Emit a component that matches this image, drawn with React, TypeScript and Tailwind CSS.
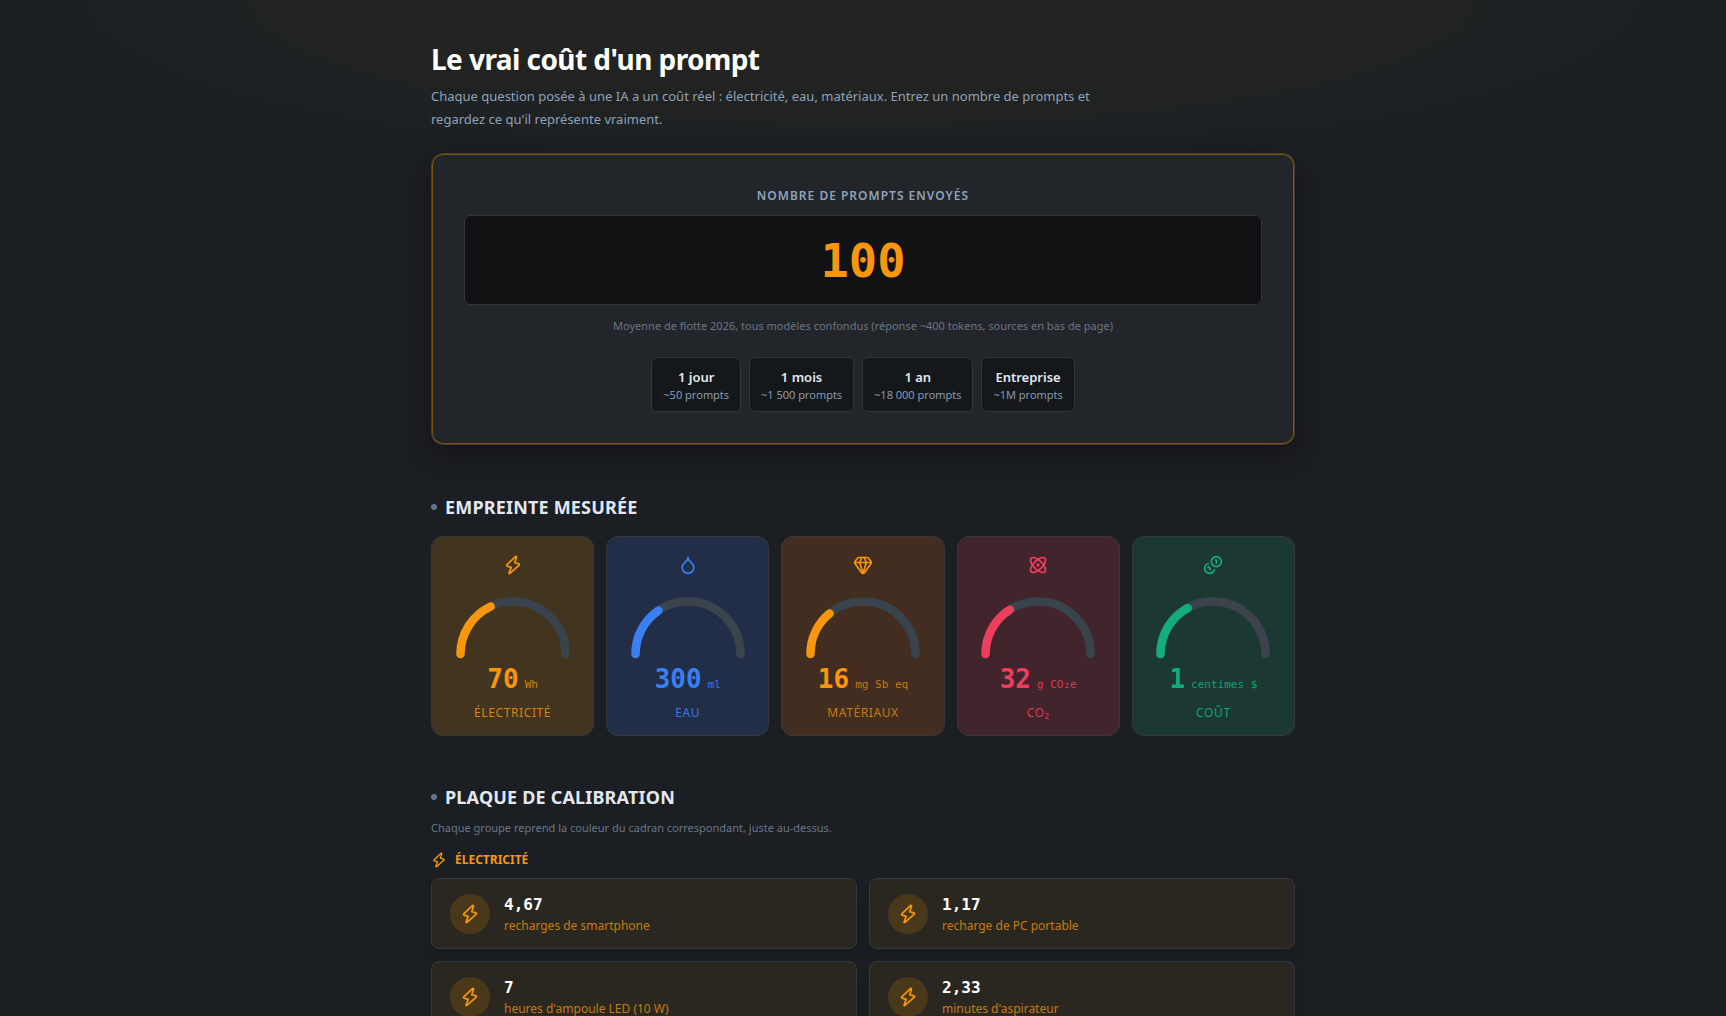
import { Atom, Droplet, Gem } from "lucide-react";

const BoltIcon = ({ className }: { className?: string }) => (
  <svg
    viewBox="0 0 24 24"
    fill="none"
    stroke="currentColor"
    strokeWidth="2"
    strokeLinecap="round"
    strokeLinejoin="round"
    className={className}
  >
    <path d="M14.6 2.2 4.500 11.900a.9.9 0 0 0 .4 1.500l5 1.400-2.600 6.500a.6.6 0 0 0 1 .7L19.500 12.100a.9.9 0 0 0-.4-1.500l-5-1.400 2-6.300a.6.6 0 0 0-1.500-.7Z" />
  </svg>
);

const CoinsIcon = ({ className }: { className?: string }) => (
  <svg
    viewBox="0 0 24 24"
    fill="none"
    stroke="currentColor"
    strokeWidth="2"
    strokeLinecap="round"
    strokeLinejoin="round"
    className={className}
  >
    <path d="M13.744 17.736a6 6 0 1 1-7.48-7.48" />
    <path d="M15 6h1v4" />
    <path d="m6.134 14.768.866-.5 2 3.464" />
    <circle cx="16" cy="8" r="6" />
  </svg>
);

const presets = [
  { label: "1 jour", detail: "~50 prompts" },
  { label: "1 mois", detail: "~1 500 prompts" },
  { label: "1 an", detail: "~18 000 prompts" },
  { label: "Entreprise", detail: "~1M prompts" },
];

const gauges = [
  {
    label: "Électricité",
    value: "70",
    unit: "Wh",
    percent: 36,
    icon: BoltIcon,
    card: "bg-[#42341f] text-[#f8960e]",
    track: "text-[#38434c]",
    muted: "text-[#d7840f]",
  },
  {
    label: "Eau",
    value: "300",
    unit: "ml",
    percent: 31,
    icon: Droplet,
    card: "bg-[#222e48] text-[#3980f2]",
    track: "text-[#3b444b]",
    muted: "text-[#3878e0]",
  },
  {
    label: "Matériaux",
    value: "16",
    unit: "mg Sb eq",
    percent: 28,
    icon: Gem,
    card: "bg-[#422d20] text-[#f8960e]",
    track: "text-[#38434c]",
    muted: "text-[#c67b12]",
  },
  {
    label: "CO₂",
    value: "32",
    unit: "g CO₂e",
    percent: 32,
    icon: Atom,
    card: "bg-[#42242c] text-[#ee3e5c]",
    track: "text-[#38434c]",
    muted: "text-[#d93c56]",
  },
  {
    label: "Coût",
    value: "1",
    unit: "centimes $",
    percent: 34,
    icon: CoinsIcon,
    card: "bg-[#1b3833] text-[#13ad7c]",
    track: "text-[#3c434c]",
    muted: "text-[#14a073]",
  },
];

const equivalents = [
  { value: "4,67", label: "recharges de smartphone" },
  { value: "1,17", label: "recharge de PC portable" },
  { value: "7", label: "heures d'ampoule LED (10 W)" },
  { value: "2,33", label: "minutes d'aspirateur" },
];

const SectionTitle = ({ children }: { children: string }) => (
  <h2 className="flex items-center gap-2 text-lg leading-7 font-bold tracking-[0.01em] uppercase text-slate-200">
    <span className="size-1.5 rounded-full bg-slate-500" />
    {children}
  </h2>
);

const Gauge = ({ percent, track }: { percent: number; track: string }) => (
  <svg viewBox="0 0 120 68" fill="none" strokeWidth="8.5" strokeLinecap="round" className="w-[120px]">
    <path d="M7.500 62a52.500 52.500 0 0 1 105 0" stroke="currentColor" className={track} />
    <path
      d="M7.500 62a52.500 52.500 0 0 1 105 0"
      stroke="currentColor"
      pathLength="100"
      strokeDasharray={`${percent} 200`}
    />
  </svg>
);

export default function App() {
  return (
    <div className="min-h-screen bg-[#1b1e23] bg-[radial-gradient(ellipse_60%_210px_at_50%_0%,#232421,#212322_50%,#1d2124_70%,#1b1e23)] font-['Noto_Sans',sans-serif]">
      <main className="mx-auto max-w-[912px] px-6 pt-10">
        <header>
          <h1 className="text-[28px] leading-[38px] font-bold tracking-[-0.02em] text-white">
            Le vrai coût d'un prompt
          </h1>
          <p className="mt-[7px] max-w-[680px] text-[13px] leading-[23px] text-slate-400">
            Chaque question posée à une IA a un coût réel : électricité, eau, matériaux. Entrez un
            nombre de prompts et regardez ce qu'il représente vraiment.
          </p>
        </header>

        <section className="mt-[22px] flex flex-col items-center rounded-xl border border-[#4d3c22] bg-[#22252a] p-8 shadow-[inset_0_0_0_1px_#7f5413,0_8px_24px_rgba(0,0,0,0.35)]">
          <label
            htmlFor="prompts"
            className="text-xs leading-5 font-semibold tracking-[1px] uppercase text-slate-400"
          >
            Nombre de prompts envoyés
          </label>
          <input
            id="prompts"
            type="text"
            defaultValue="100"
            className="mt-[9px] h-[90px] w-full rounded-md border border-[#30363c] bg-[#111214] text-center font-['DejaVu_Sans_Mono',monospace] text-[47px] font-bold text-[#f8960e] outline-none"
          />
          <p className="mt-3 text-[11px] leading-[18px] text-[#6a7686]">
            Moyenne de flotte 2026, tous modèles confondus (réponse ~400 tokens, sources en bas de
            page)
          </p>
          <div className="mt-[22px] flex flex-wrap justify-center gap-2">
            {presets.map((preset) => (
              <button
                key={preset.label}
                type="button"
                className="flex h-[55px] flex-col items-center justify-center rounded-md border border-[#30353b] bg-[#15181b] px-[11px]"
              >
                <span className="text-[13px] leading-5 font-semibold text-slate-200">
                  {preset.label}
                </span>
                <span className="font-['Open_Sans',sans-serif] text-[11px] leading-4 text-slate-400">
                  {preset.detail}
                </span>
              </button>
            ))}
          </div>
        </section>

        <section className="mt-12">
          <SectionTitle>Empreinte mesurée</SectionTitle>
          <div className="mt-[15px] grid grid-cols-5 gap-3">
            {gauges.map(({ icon: Icon, ...gauge }) => (
              <div
                key={gauge.label}
                className={`flex h-[200px] flex-col items-center rounded-xl border border-[#34393f] pt-[18px] ${gauge.card}`}
              >
                <Icon className="size-5" />
                <div className="mt-[17px]">
                  <Gauge percent={gauge.percent} track={gauge.track} />
                </div>
                <div className="mt-[3px] flex items-baseline gap-1.5 font-['DejaVu_Sans_Mono',monospace]">
                  <span className="text-[26px] leading-8 font-bold">{gauge.value}</span>
                  <span className={`text-[11px] ${gauge.muted}`}>{gauge.unit}</span>
                </div>
                <div className={`mt-2.5 text-xs leading-4 tracking-wider uppercase ${gauge.muted}`}>
                  {gauge.label}
                </div>
              </div>
            ))}
          </div>
        </section>

        <section className="mt-[47px]">
          <SectionTitle>Plaque de calibration</SectionTitle>
          <p className="mt-2 text-[11px] leading-[18px] text-[#6a7686]">
            Chaque groupe reprend la couleur du cadran correspondant, juste au-dessus.
          </p>
          <h3 className="mt-[13px] flex items-center gap-2 text-xs leading-5 font-bold uppercase text-[#f8960e]">
            <BoltIcon className="size-4" />
            Électricité
          </h3>
          <div className="mt-2 grid grid-cols-2 gap-3">
            {equivalents.map((item) => (
              <div
                key={item.label}
                className="flex h-[71px] items-center gap-3.5 rounded-lg border border-[#34393f] bg-[#2a2721] px-[18px] shadow-lg"
              >
                <div className="flex size-10 items-center justify-center rounded-full bg-[#4a381b] text-[#f8960e]">
                  <BoltIcon className="size-5" />
                </div>
                <div className="pt-1">
                  <div className="font-['DejaVu_Sans_Mono',monospace] text-base leading-5 font-bold text-white">
                    {item.value}
                  </div>
                  <div className="text-xs leading-[21px] text-[#c67b12]">{item.label}</div>
                </div>
              </div>
            ))}
          </div>
        </section>
      </main>
    </div>
  );
}
